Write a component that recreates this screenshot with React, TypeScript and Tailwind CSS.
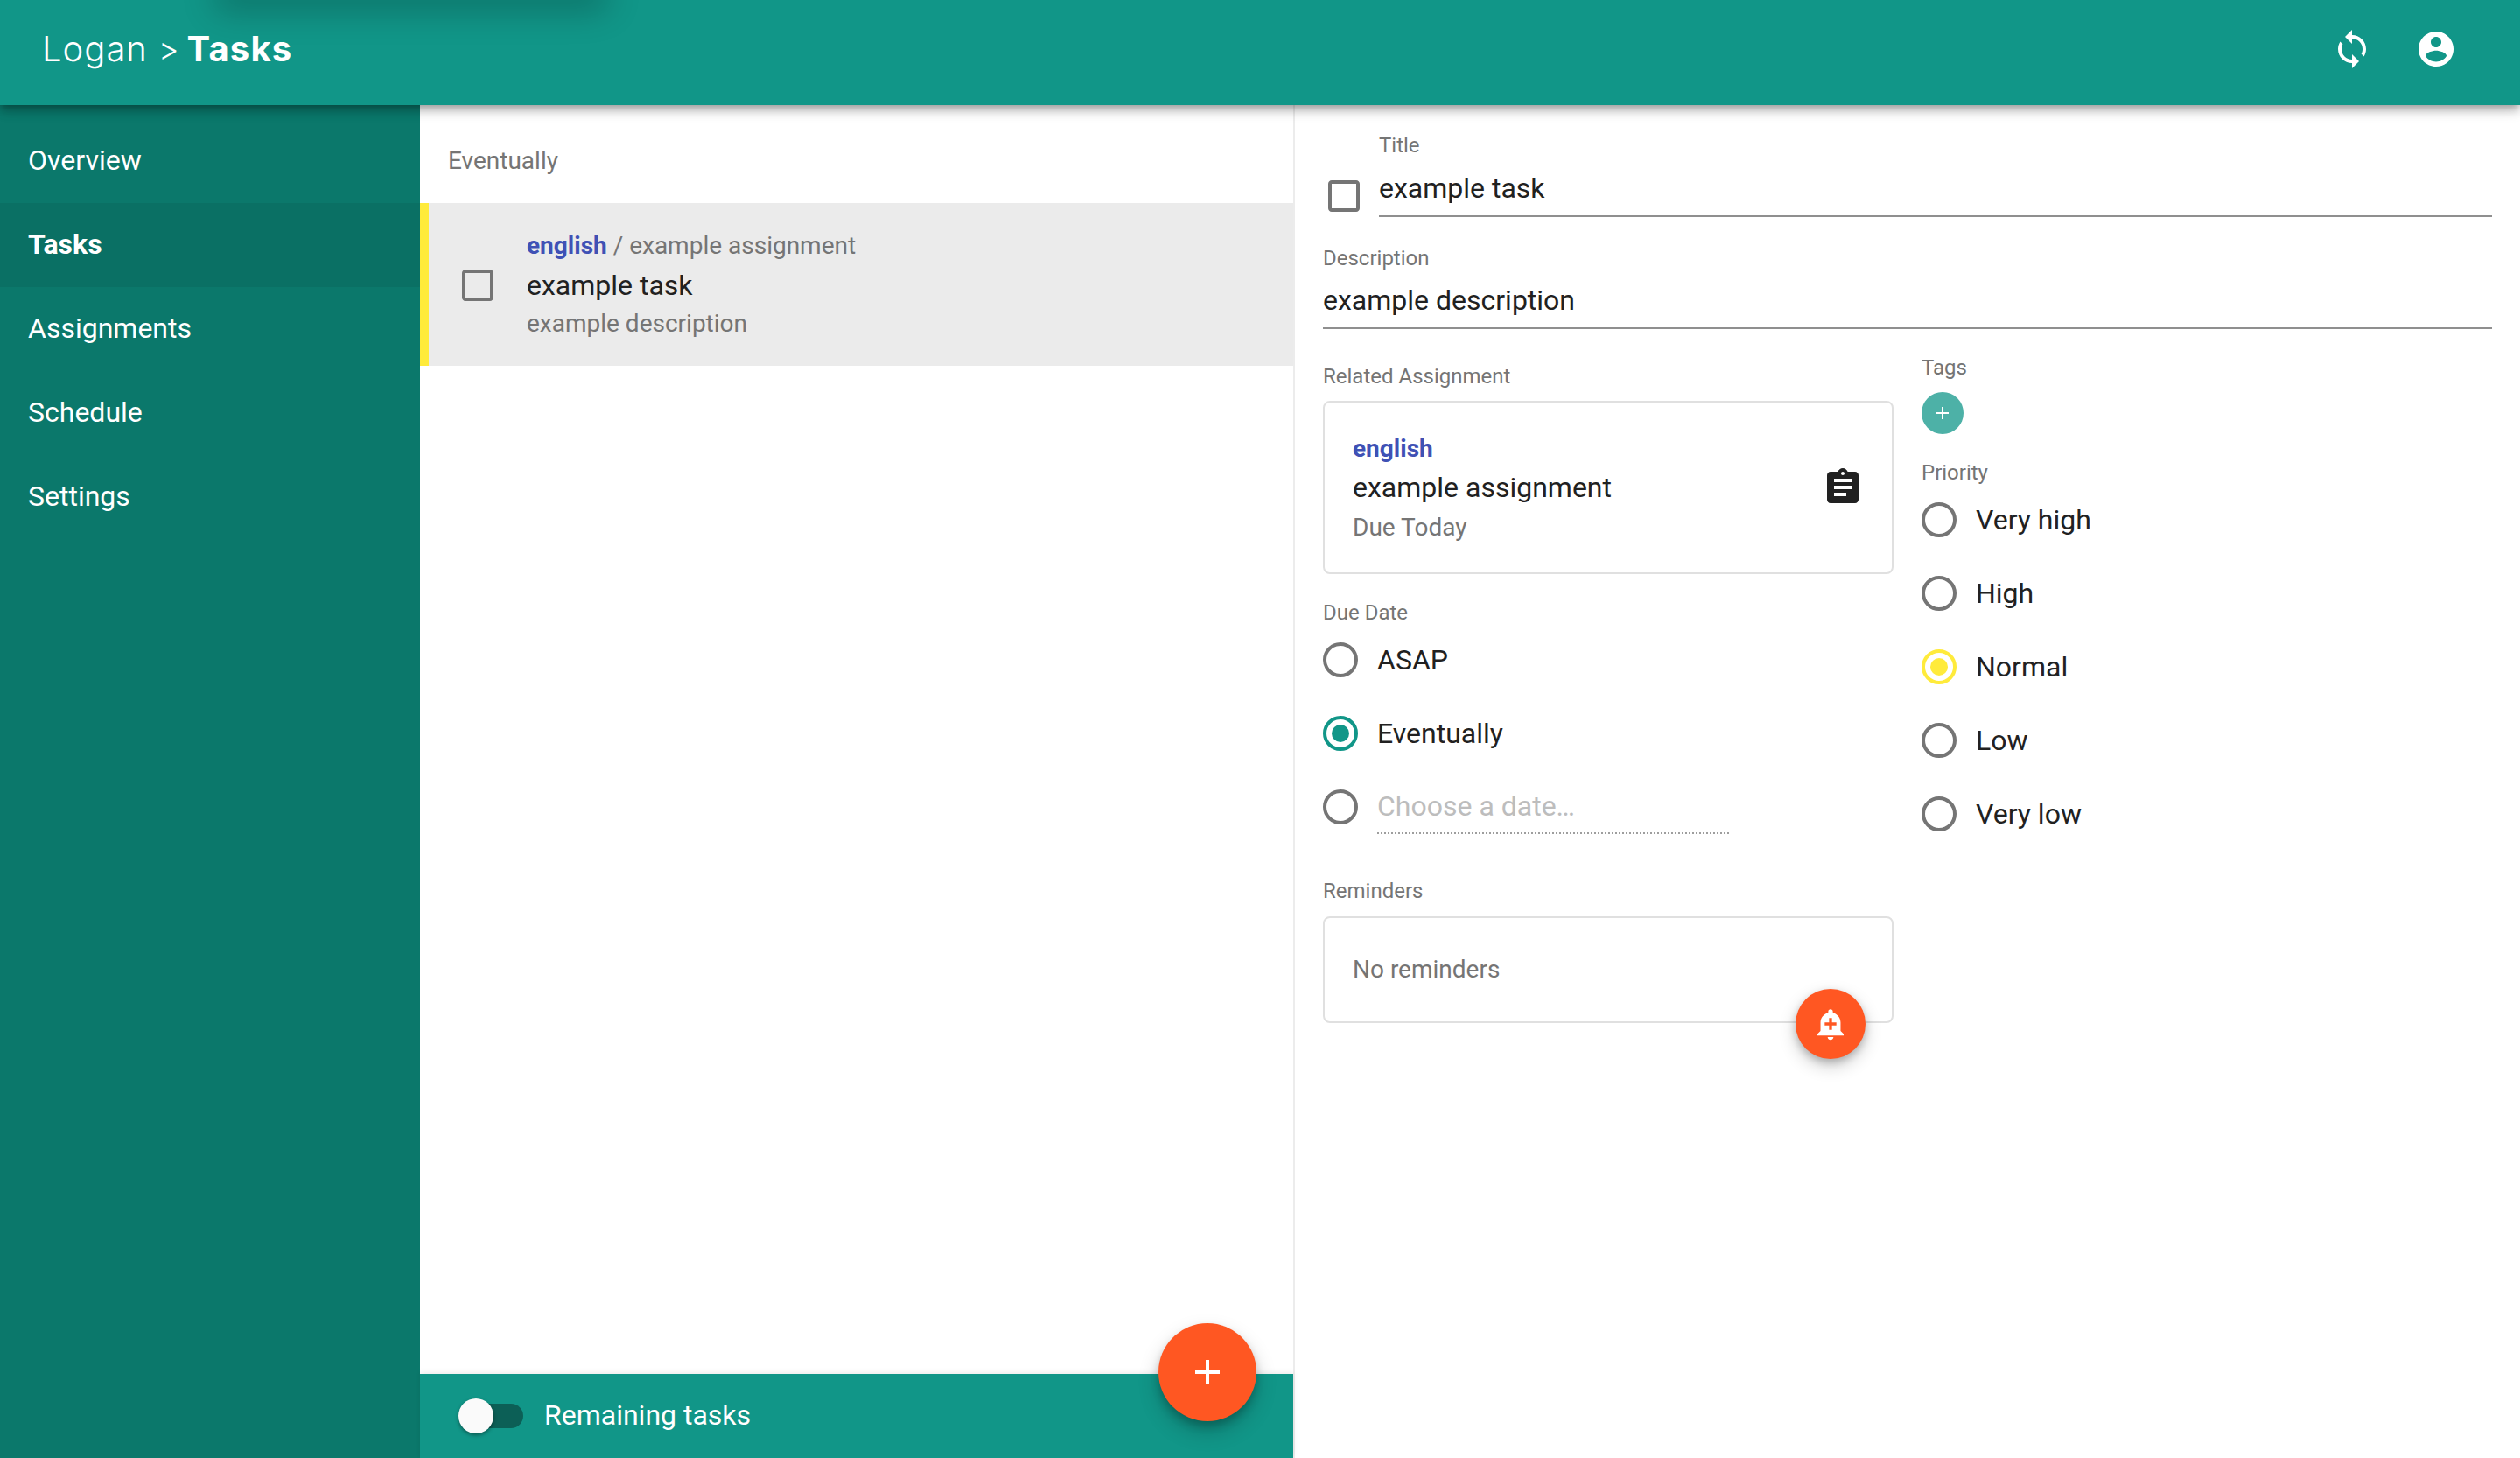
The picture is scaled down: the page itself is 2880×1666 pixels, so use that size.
const sidebarItems = ["Overview", "Tasks", "Assignments", "Schedule", "Settings"]
const priorities = ["Very high", "High", "Normal", "Low", "Very low"]

const Icon = ({ d, className }: { d: string; className: string }) => (
  <svg viewBox="0 0 24 24" fill="currentColor" className={className}>
    <path d={d} />
  </svg>
)

const CHECKBOX = "M19 5v14H5V5h14m0-2H5c-1.1 0-2 .9-2 2v14c0 1.1.9 2 2 2h14c1.1 0 2-.9 2-2V5c0-1.1-.9-2-2-2z"
const SYNC = "M12 4V1L8 5l4 4V6c3.31 0 6 2.69 6 6 0 1.01-.25 1.97-.7 2.8l1.46 1.46C19.54 15.03 20 13.57 20 12c0-4.42-3.58-8-8-8zm0 14c-3.31 0-6-2.69-6-6 0-1.01.25-1.97.7-2.8L5.24 7.74C4.46 8.97 4 10.43 4 12c0 4.42 3.58 8 8 8v3l4-4-4-4v3z"
const ACCOUNT = "M12 2C6.48 2 2 6.48 2 12s4.48 10 10 10 10-4.48 10-10S17.52 2 12 2zm0 3c1.66 0 3 1.34 3 3s-1.34 3-3 3-3-1.34-3-3 1.34-3 3-3zm0 14.2c-2.5 0-4.71-1.28-6-3.22.03-1.99 4-3.08 6-3.08 1.99 0 5.97 1.09 6 3.08-1.29 1.94-3.5 3.22-6 3.22z"
const ASSIGNMENT = "M19 3h-4.18C14.4 1.84 13.3 1 12 1c-1.3 0-2.4.84-2.82 2H5c-1.1 0-2 .9-2 2v14c0 1.1.9 2 2 2h14c1.1 0 2-.9 2-2V5c0-1.1-.9-2-2-2zm-7 0c.55 0 1 .45 1 1s-.45 1-1 1-1-.45-1-1 .45-1 1-1zm2 14H7v-2h7v2zm3-4H7v-2h10v2zm0-4H7V7h10v2z"
const ADD_ALERT = "M10.01 21.01c0 1.1.89 1.99 1.99 1.99s1.99-.89 1.99-1.99h-3.98zm8.87-4.19V11c0-3.25-2.25-5.97-5.29-6.69v-.72C13.59 2.71 12.88 2 12 2s-1.59.71-1.59 1.59v.72C7.37 5.03 5.12 7.75 5.12 11v5.82L3 18.94V20h18v-1.06l-2.12-2.12zM16 13.01h-3v3h-2v-3H8V11h3V8h2v3h3v2.01z"

const Label = ({ children, className = "" }: { children: React.ReactNode; className?: string }) => (
  <div className={`h-[32px] leading-[32px] text-[24px] text-[#757575] ${className}`}>{children}</div>
)

const Radio = ({ tone }: { tone?: "teal" | "yellow" }) => {
  const border = tone === "teal" ? "border-[#119688]" : tone === "yellow" ? "border-[#ffeb3b]" : "border-[#757575]"
  return (
    <div className={`w-[40px] h-[40px] rounded-full border-[4px] flex items-center justify-center shrink-0 ${border}`}>
      {tone === "teal" && <div className="w-[20px] h-[20px] rounded-full bg-[#119688]" />}
      {tone === "yellow" && <div className="w-[20px] h-[20px] rounded-full bg-[#ffeb3b]" />}
    </div>
  )
}

const RadioRow = ({ label, tone, gap }: { label: string; tone?: "teal" | "yellow"; gap: string }) => (
  <div className={`flex items-center h-[48px] text-[32px] text-[#212121] ${gap}`}>
    <Radio tone={tone} />
    <span className="pb-[1px]">{label}</span>
  </div>
)

export default function App() {
  return (
    <div className="w-screen h-screen flex flex-col overflow-hidden bg-white font-['Roboto',sans-serif]">
      {/* Header */}
      <header className="relative z-10 h-[120px] shrink-0 bg-[#119688] flex items-center pl-[48px] pr-[72px] text-white overflow-visible shadow-[0_4px_8px_-2px_rgba(0,0,0,0.25),0_8px_10px_rgba(0,0,0,0.14),0_2px_20px_rgba(0,0,0,0.12)]">
        <div className="absolute inset-0 overflow-hidden pointer-events-none">
          <div className="absolute left-[250px] -top-[20px] w-[440px] h-[20px] rounded-full shadow-[0_6px_36px_8px_rgba(0,0,0,0.22)]" />
        </div>
        <div className="relative flex items-center text-[40px] -mt-[8px] font-['Inter',sans-serif]">
          <span className="font-light tracking-[1px]">Logan</span>
          <span className="font-light ml-[12px] mr-[9px] text-[36px]">&gt;</span>
          <span className="font-bold tracking-[1.2px]">Tasks</span>
        </div>
        <div className="relative ml-auto flex items-center gap-[48px] -mt-[8px]">
          <Icon d={SYNC} className="w-[48px] h-[48px]" />
          <Icon d={ACCOUNT} className="w-[48px] h-[48px]" />
        </div>
      </header>

      <div className="flex flex-1 min-h-0">
        {/* Sidebar */}
        <nav className="w-[480px] shrink-0 bg-[#0b786b] pt-[16px] text-white text-[32px]">
          {sidebarItems.map((item) => (
            <div
              key={item}
              className={`h-[96px] flex items-center pl-[32px] pb-[2px] ${item === "Tasks" ? "bg-[#0a7064] font-bold" : ""}`}
            >
              {item}
            </div>
          ))}
        </nav>

        {/* Task list */}
        <section className="relative w-[1000px] shrink-0 flex flex-col border-r-2 border-[#ececec]">
          <div className="h-[112px] shrink-0 flex items-center pl-[32px] pt-[16px] text-[28px] text-[#757575]">Eventually</div>
          <div className="h-[186px] shrink-0 flex items-center bg-[#ebebeb] border-l-[10px] border-[#ffeb3b]">
            <Icon d={CHECKBOX} className="w-[48px] h-[48px] text-[#757575] ml-[32px] mt-[2px]" />
            <div className="ml-[32px] flex flex-col">
              <div className="h-[46px] flex items-center text-[28px] text-[#757575]">
                <span className="font-bold text-[#3f51b5]">english</span>
                <span>&nbsp;/ example assignment</span>
              </div>
              <div className="h-[44px] flex items-center pb-[1px] text-[32px] text-[#212121]">example task</div>
              <div className="h-[44px] flex items-center text-[28px] text-[#757575]">example description</div>
            </div>
          </div>
          <div className="flex-1" />
          <div className="h-[96px] shrink-0 bg-[#119688] flex items-center pl-[44px] text-white text-[32px] shadow-[0_-2px_6px_rgba(0,0,0,0.08)]">
            <div className="relative w-[74px] h-[40px] flex items-center justify-end">
              <div className="w-[68px] h-[28px] rounded-full bg-[#0c5f56]" />
              <div className="absolute left-0 top-0 w-[40px] h-[40px] rounded-full bg-[#fafafa] shadow-[0_2px_4px_rgba(0,0,0,0.4)]" />
            </div>
            <span className="ml-[24px] pb-[2px]">Remaining tasks</span>
          </div>
          <button className="absolute left-[844px] top-[1392px] w-[112px] h-[112px] rounded-full bg-[#ff5722] flex items-center justify-center text-white shadow-[0_6px_10px_rgba(0,0,0,0.2),0_12px_24px_rgba(0,0,0,0.2)]">
            <svg viewBox="0 0 28 28" className="w-[28px] h-[28px]" fill="currentColor">
              <path d="M12 0h4v12h12v4H16v12h-4V16H0v-4h12z" />
            </svg>
          </button>
        </section>

        {/* Detail panel */}
        <section className="flex-1 min-w-0 px-[32px]">
          <div className="flex items-end mt-[30px]">
            <Icon d={CHECKBOX} className="w-[48px] h-[48px] text-[#757575] mr-[16px] shrink-0" />
            <div className="flex-1">
              <Label>Title</Label>
              <div className="h-[66px] pt-[1px] flex items-center text-[32px] text-[#212121] border-b-2 border-[#8f8f8f]">example task</div>
            </div>
          </div>

          <Label className="mt-[31px]">Description</Label>
          <div className="h-[65px] flex items-center text-[32px] text-[#212121] border-b-2 border-[#8f8f8f]">example description</div>

          <div className="flex gap-[32px]">
            <div className="w-[652px] shrink-0">
              <Label className="mt-[38px]">Related Assignment</Label>
              <div className="relative mt-[12px] h-[198px] rounded-[8px] border-2 border-[#e0e0e0] flex items-start pt-[31px] pl-[32px] pr-[32px]">
                <div className="flex flex-col">
                  <div className="h-[44px] flex items-center text-[28px] font-bold text-[#3f51b5]">english</div>
                  <div className="h-[44px] flex items-center text-[32px] text-[#212121]">example assignment</div>
                  <div className="h-[48px] flex items-center text-[28px] text-[#757575]">Due Today</div>
                </div>
                <Icon d={ASSIGNMENT} className="w-[48px] h-[48px] text-[#212121] ml-auto mt-[42px]" />
              </div>

              <Label className="mt-[28px]">Due Date</Label>
              <div className="mt-[14px] flex flex-col gap-[36px]">
                <RadioRow label="ASAP" gap="gap-[22px]" />
                <RadioRow label="Eventually" tone="teal" gap="gap-[22px]" />
                <div className="flex items-start gap-[22px] h-[48px]">
                  <div className="h-[48px] flex items-center"><Radio /></div>
                  <div className="w-[402px] h-[55px] flex items-start border-b-2 border-dotted border-[#9e9e9e] text-[32px] text-[#bdbdbd] leading-[47px]">
                    Choose a date…
                  </div>
                </div>
              </div>

              <Label className="mt-[56px]">Reminders</Label>
              <div className="relative mt-[13px] h-[122px] rounded-[8px] border-2 border-[#e0e0e0] flex items-center pl-[32px] text-[28px] text-[#757575]">
                No reminders
                <button className="absolute left-[538px] top-[81px] w-[80px] h-[80px] rounded-full bg-[#ff5722] flex items-center justify-center text-white shadow-[0_4px_8px_rgba(0,0,0,0.2),0_8px_20px_rgba(0,0,0,0.2)]">
                  <Icon d={ADD_ALERT} className="w-[40px] h-[40px]" />
                </button>
              </div>
            </div>

            <div className="flex-1">
              <Label className="mt-[28px]">Tags</Label>
              <button className="mt-[12px] w-[48px] h-[48px] rounded-full bg-[#4db1a7] flex items-center justify-center text-white">
                <svg viewBox="0 0 14 14" className="w-[14px] h-[14px]" fill="currentColor">
                  <path d="M6 0h2v6h6v2H8v6H6V8H0V6h6z" />
                </svg>
              </button>
              <Label className="mt-[28px]">Priority</Label>
              <div className="mt-[14px] flex flex-col gap-[36px]">
                {priorities.map((p) => (
                  <RadioRow key={p} label={p} tone={p === "Normal" ? "yellow" : undefined} gap="gap-[22px]" />
                ))}
              </div>
            </div>
          </div>
        </section>
      </div>
    </div>
  )
}
